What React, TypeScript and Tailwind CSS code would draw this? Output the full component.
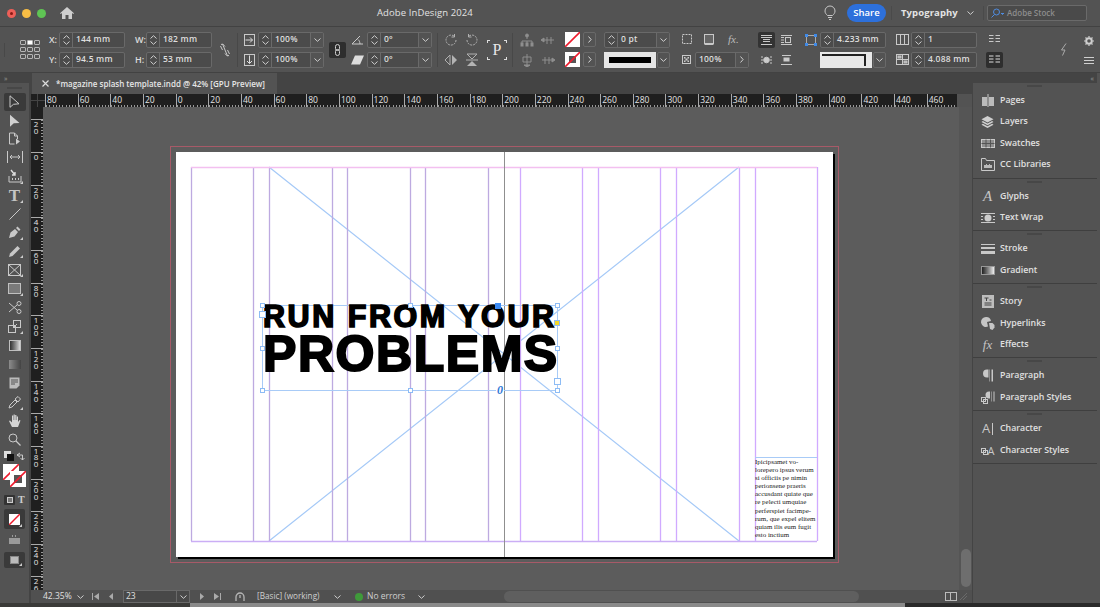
import React from "react";

const S = "#c9c9c9";
const Svg = ({ w = 14, h = 14, children, className = "" }: { w?: number; h?: number; children?: React.ReactNode; className?: string }) => (
  <svg width={w} height={h} viewBox={`0 0 ${w} ${h}`} fill="none" stroke={S} strokeWidth="1" className={`shrink-0 ${className}`}>
    {children}
  </svg>
);

const Chevron = ({ up = false }: { up?: boolean }) => (
  <svg width="7" height="4" viewBox="0 0 7 4" fill="none" stroke="#cfcfcf" strokeWidth="1">
    <path d={up ? "M.5 3.5 3.5.7l3 2.8" : "M.5.5l3 2.8 3-2.8"} />
  </svg>
);

const Stepper = () => (
  <div className="w-[13px] h-full border-r border-[#6a6a6a] flex flex-col items-center justify-center gap-[2px] shrink-0">
    <Chevron up />
    <Chevron />
  </div>
);

const Field = ({ w, value, stepper = true, dd = false, arrow = false }: { w: string; value: string; stepper?: boolean; dd?: boolean; arrow?: boolean }) => (
  <div className={`${w} h-[16px] border border-[#696969] rounded-[2px] bg-[#4b4b4b] flex items-center text-[8.5px] text-[#dedede] font-semibold shrink-0`}>
    {stepper && <Stepper />}
    <span className="flex-1 pl-[3px] tracking-[0.2px] whitespace-nowrap overflow-hidden">{value}</span>
    {dd && (
      <div className="w-[13px] h-full border-l border-[#6a6a6a] bg-[#535353] flex items-center justify-center shrink-0">
        <Chevron />
      </div>
    )}
    {arrow && (
      <div className="w-[13px] h-full border-l border-[#6a6a6a] bg-[#535353] flex items-center justify-center shrink-0">
        <svg width="4" height="7" viewBox="0 0 4 7" fill="none" stroke="#cfcfcf"><path d="M.5.5l2.6 3-2.6 3" /></svg>
      </div>
    )}
  </div>
);

const Cell = ({ a, b, className = "" }: { a: React.ReactNode; b: React.ReactNode; className?: string }) => (
  <div className={`flex flex-col gap-[4px] shrink-0 ${className}`}>
    <div className="h-[16px] flex items-center">{a}</div>
    <div className="h-[16px] flex items-center">{b}</div>
  </div>
);

const Sep = ({ className }: { className: string }) => <div className={`w-px h-[34px] bg-[#484848] shrink-0 ${className}`} />;

const Lbl = ({ t }: { t: string }) => <span className="w-[10px] text-[9px] font-semibold text-[#dcdcdc] shrink-0">{t}</span>;

const NoneSwatch = ({ inner = false }: { inner?: boolean }) => (
  <svg width="15" height="15" viewBox="0 0 15 15" className="shrink-0">
    <rect width="15" height="15" fill="#fff" />
    {inner && <rect x="4" y="4" width="7" height="7" fill="#555" />}
    <path d="M0 15 15 0" stroke="#ee1c2e" strokeWidth="1.6" />
  </svg>
);

const SmallBtn = () => (
  <div className="w-[13px] h-[15px] border border-[#696969] rounded-[2px] flex items-center justify-center">
    <svg width="4" height="7" viewBox="0 0 4 7" fill="none" stroke="#d5d5d5"><path d="M.5.5l2.6 3-2.6 3" /></svg>
  </div>
);

const ControlBar = () => (
  <div className="h-[47px] border-t border-b border-[#424242] flex items-center bg-[#535353] shrink-0">
    <Sep className="ml-[4px] !h-[14px]" />
    <div className="ml-[15px] w-[20px] grid grid-cols-3 gap-[1.5px] shrink-0">
      {[0, 1, 2, 3, 4, 5, 6, 7, 8].map((i) => (
        <div key={i} className={`h-[5.5px] rounded-[1px] border border-[#b5b5b5] ${i === 1 ? "bg-white" : ""}`} />
      ))}
    </div>
    <Cell className="ml-[9px]" a={<><Lbl t="X:" /><Field w="w-[66px]" value="144 mm" /></>} b={<><Lbl t="Y:" /><Field w="w-[66px]" value="94.5 mm" /></>} />
    <Cell className="ml-[10px]" a={<><Lbl t="W:" /><Field w="w-[66px] ml-[1px]" value="182 mm" /></>} b={<><Lbl t="H:" /><Field w="w-[66px] ml-[1px]" value="53 mm" /></>} />
    <Svg w={14} h={14} className="ml-[6px]">
      <path d="M3 1.500c2-1 3 .5 4 2M11 12.500c-2 1-3-.5-4-2M4.500 1l5 12M2.500 3l2 4M11.500 11l-2-4" />
    </Svg>
    <Sep className="ml-[5px]" />
    <Cell
      className="ml-[6px]"
      a={<><Svg w={11} h={12} className="mr-[3px]"><rect x=".5" y=".5" width="10" height="11" /><path d="M1.500 6h7M6 3.500 8.500 6 6 8.500" stroke="#ddd" /></Svg><Field w="w-[66px]" value="100%" dd /></>}
      b={<><Svg w={11} h={12} className="mr-[3px]"><rect x=".5" y=".5" width="10" height="11" /><path d="M5.500 1.500v8M3 7l2.500 2.500L8 7" stroke="#ddd" /></Svg><Field w="w-[66px]" value="100%" dd /></>}
    />
    <div className="ml-[5px] w-[17px] h-[16px] rounded-[2px] bg-[#2e2e2e] flex items-center justify-center shrink-0">
      <svg width="7" height="12" viewBox="0 0 7 12" fill="none" stroke="#d0d0d0"><rect x="1.500" y=".5" width="4" height="6" rx="2" /><rect x="1.500" y="5.500" width="4" height="6" rx="2" /></svg>
    </div>
    <Cell
      className="ml-[5px]"
      a={<><Svg w={13} h={10} className="mr-[3px]"><path d="M1 9h11M1 9l8-8M7 4.500c1.300 1 1.800 2.500 2 4.500" /></Svg><Field w="w-[65px]" value="0°" dd /></>}
      b={<><Svg w={13} h={10} className="mr-[3px]"><path d="M0 9.500 4 .5h9L9 9.500z" fill="#ddd" stroke="none" /></Svg><Field w="w-[65px]" value="0°" dd /></>}
    />
    <Sep className="ml-[5px]" />
    <div className="ml-[6px] w-[34px] grid grid-cols-2 gap-y-[6px] gap-x-[8px] shrink-0 opacity-80">
      <Svg w={14} h={14}><path d="M12 7a5 5 0 1 1-1.500-3.500" strokeDasharray="2 1" /><path d="M10.500 1v3h-3" /></Svg>
      <Svg w={14} h={14}><path d="M2 7a5 5 0 1 0 1.500-3.500" strokeDasharray="2 1" /><path d="M3.500 1v3h3" /></Svg>
      <Svg w={14} h={14}><path d="M6 2v10L1 7z" /><path d="M8 2v10l5-5z" fill="#ccc" stroke="none" /></Svg>
      <Svg w={14} h={14}><path d="M2 1h10L7 6z" /><path d="M2 13h10L7 8z" fill="#ccc" stroke="none" /><path d="M1 7h12" /></Svg>
    </div>
    <div className="ml-[9px] w-[20px] h-[20px] relative flex items-center justify-center shrink-0 font-['Liberation_Serif',serif] text-[16px] text-[#e8e8e8] leading-none">
      P
      <div className="absolute left-0 top-0 w-[3px] h-[3px] border-l border-t border-[#ddd]" />
      <div className="absolute right-0 top-0 w-[3px] h-[3px] border-r border-t border-[#ddd]" />
      <div className="absolute left-0 bottom-0 w-[3px] h-[3px] border-l border-b border-[#ddd]" />
      <div className="absolute right-0 bottom-0 w-[3px] h-[3px] border-r border-b border-[#ddd]" />
    </div>
    <Sep className="ml-[5px]" />
    <div className="ml-[7px] w-[35px] grid grid-cols-2 gap-y-[6px] gap-x-[7px] shrink-0 opacity-50">
      <Svg w={14} h={14}><path d="M7 1v5M2 12V8h10v4M7 8v4" /><circle cx="7" cy="2.500" r="1.500" fill="#ccc" /><rect x="1" y="10" width="2" height="3" fill="#ccc" /><rect x="6" y="10" width="2" height="3" fill="#ccc" /><rect x="11" y="10" width="2" height="3" fill="#ccc" /></Svg>
      <Svg w={14} h={14}><path d="M3 7h10M6 4v7M10 4v7" /><path d="M0 7l3-2v4z" fill="#ccc" /></Svg>
      <Svg w={14} h={14}><path d="M7 1v12M3 4h8v5H3z" /><path d="M4 12h6l-3 2z" fill="#ccc" /></Svg>
      <Svg w={14} h={14}><path d="M1 7h10M4 4v7M8 4v7" /><path d="M14 7l-3-2v4z" fill="#ccc" /></Svg>
    </div>
    <Cell className="ml-[10px]" a={<><NoneSwatch /><div className="ml-[3px]"><SmallBtn /></div></>} b={<><NoneSwatch inner /><div className="ml-[3px]"><SmallBtn /></div></>} />
    <Cell
      className="ml-[8px]"
      a={<Field w="w-[66px]" value="0 pt" dd />}
      b={<><div className="w-[52px] h-[16px] bg-[#e6e6e6] flex items-center justify-center shrink-0"><div className="w-[42px] h-[6px] bg-black" /></div><div className="ml-px w-[13px] h-[16px] border border-[#696969] rounded-[2px] flex items-center justify-center"><Chevron /></div></>}
    />
    <Cell
      className="ml-[12px] w-[67px]"
      a={<div className="flex items-center"><Svg w={11} h={11}><rect x=".5" y=".5" width="9" height="9" strokeDasharray="2 1" /></Svg><Svg w={11} h={11} className="ml-[11px]"><rect x=".5" y=".5" width="9" height="9" fill="#666" /><path d="M.5 10.500h9" strokeWidth="1.500" /></Svg><span className="ml-[13px] font-['Liberation_Serif',serif] italic text-[11px] text-[#bbb] leading-none">fx.</span></div>}
      b={<><Svg w={9} h={9} className="mr-[4px]"><rect x=".5" y=".5" width="8" height="8" /><path d="M2 2h1.500v1.500H2zM5.500 2H7v1.500H5.500zM3.500 3.500H5.500V5.500H3.500zM2 5.500h1.500V7H2zM5.500 5.500H7V7H5.500z" fill="#ccc" stroke="none" /></Svg><Field w="w-[54px]" value="100%" stepper={false} arrow /></>}
    />
    <div className="ml-[9px] w-[36px] grid grid-cols-2 gap-y-[4px] gap-x-[3px] shrink-0">
      <div className="w-[17px] h-[16px] bg-[#333] rounded-[2px] flex items-center justify-center"><Svg w={11} h={10}><path d="M0 .5h11M0 2.500h11M2 4.500h7M2 6.500h7M0 9.500h11" /></Svg></div>
      <div className="w-[17px] h-[16px] flex items-center justify-center"><Svg w={11} h={10}><path d="M0 .5h11M0 9.500h11M0 2.500h3M0 5h3M0 7.500h3" /><rect x="4.500" y="2.500" width="5" height="5" /></Svg></div>
      <div className="w-[17px] h-[16px] flex items-center justify-center"><Svg w={11} h={10}><circle cx="5.500" cy="5" r="2.800" fill="#ccc" /><path d="M0 2h2M9 2h2M0 5h2M9 5h2M0 8h2M9 8h2" /></Svg></div>
      <div className="w-[17px] h-[16px] flex items-center justify-center"><Svg w={11} h={10}><path d="M1 .5h9M0 9.500h11" /><rect x="3" y="3" width="5" height="3" fill="#ccc" /></Svg></div>
    </div>
    <Cell
      className="ml-[11px]"
      a={<><svg width="12" height="12" viewBox="0 0 12 12" className="mr-[3px] shrink-0"><rect x="1.500" y="1.500" width="9" height="9" fill="none" stroke="#aaa" /><path d="M0 0h3v3H0zM9 0h3v3H9zM0 9h3v3H0zM9 9h3v3H9z" fill="#3f8ae8" /></svg><Field w="w-[66px]" value="4.233 mm" /></>}
      b={<><div className="ml-[15px] w-[52px] h-[16px] bg-[#e8e8e8] relative shrink-0"><div className="absolute left-[2px] top-[2px] right-[6px] h-[12px] border-t-2 border-r-2 border-[#222]" /></div><div className="ml-px w-[13px] h-[16px] border border-[#696969] rounded-[2px] flex items-center justify-center"><Chevron /></div></>}
    />
    <Cell
      className="ml-[10px]"
      a={<><Svg w={13} h={11} className="mr-[2px]"><rect x=".5" y=".5" width="12" height="10" /><path d="M4.500 .5v10M8.500 .5v10" /></Svg><Field w="w-[66px]" value="1" /></>}
      b={<><Svg w={13} h={11} className="mr-[2px]"><rect x=".5" y=".5" width="12" height="10" /><path d="M6.500 .5v10M.5 5.500h12" /><rect x="2" y="2" width="3" height="2" fill="#aaa" /><rect x="8" y="7" width="3" height="2" fill="#aaa" /></Svg><Field w="w-[66px]" value="4.088 mm" /></>}
    />
    <div className="ml-[9px] w-[17px] flex flex-col gap-[4px] shrink-0">
      <div className="h-[16px] flex items-center justify-center"><Svg w={11} h={9}><path d="M0 .5h4.500M6.500 .5H11M0 3.500h4.500M6.500 3.500H11M0 6.500h4.500M6.500 6.500H11" /></Svg></div>
      <div className="h-[16px] bg-[#2e2e2e] rounded-[2px] flex items-center justify-center"><Svg w={11} h={9}><path d="M0 1h4.500M6.500 1H11M0 4h4.500M6.500 4H11M0 7h4.500M6.500 7H11" stroke="#ddd" /></Svg></div>
    </div>
    <svg width="8" height="13" viewBox="0 0 8 13" className="ml-[57px] shrink-0" fill="none" stroke="#aaa"><path d="M6 .5 1.500 7H5l-2.500 5.500" /></svg>
    <div className="ml-[16px] flex flex-col gap-[11px] items-center shrink-0">
      <svg width="10" height="10" viewBox="0 0 10 10" fill="none" stroke="#cfcfcf" strokeWidth="2"><circle cx="5" cy="5" r="2.800" /><path d="M5 0v1.500M5 8.500V10M0 5h1.500M8.500 5H10M1.500 1.500l1 1M7.500 7.500l1 1M8.500 1.500l-1 1M2.500 7.500l-1 1" strokeWidth="1.200" /></svg>
      <svg width="10" height="7" viewBox="0 0 10 7" stroke="#cfcfcf"><path d="M0 .5h10M0 3.500h10M0 6.500h10" /></svg>
    </div>
  </div>
);

const TitleBar = () => (
  <div className="h-[26px] flex items-center relative shrink-0 bg-[#535353]">
    <div className="ml-[7px] w-[9px] h-[9px] rounded-full bg-[#ee5f58] flex items-center justify-center"><div className="w-[3px] h-[3px] rounded-full bg-[#8b1a14]" /></div>
    <div className="ml-[6px] w-[9px] h-[9px] rounded-full bg-[#f7bd45]" />
    <div className="ml-[6px] w-[9px] h-[9px] rounded-full bg-[#5fc454]" />
    <svg width="14" height="12" viewBox="0 0 14 12" className="ml-[14px]" fill="#cfcfcf"><path d="M7 0 0 6.300l.8.7L2 6v6h3.500V8h3v4H12V6l1.200 1 .8-.7z" /></svg>
    <span className="ml-[303px] text-[9.500px] text-[#e2e2e2] font-medium tracking-[0.1px] whitespace-nowrap w-[110px]">Adobe InDesign 2024</span>
    <svg width="12" height="16" viewBox="0 0 12 16" fill="none" stroke="#c8c8c8" className="ml-[337px]"><path d="M3.500 10.500C2 9 1 8 1 6a5 5 0 0 1 10 0c0 2-1 3-2.500 4.500z" /><path d="M4 12.500h4M5 14.500h2" /></svg>
    <div className="ml-[11px] w-[39px] h-[18px] rounded-full bg-[#2d70db] flex items-center justify-center text-[9.500px] font-semibold text-white">Share</div>
    <div className="ml-[5px] w-px h-[14px] bg-[#4a4a4a]" />
    <span className="ml-[9px] text-[9.500px] font-bold text-[#e4e4e4] tracking-[0.1px] w-[60px]">Typography</span>
    <div className="ml-[6px]"><Chevron /></div>
    <div className="ml-[9px] w-px h-[14px] bg-[#4a4a4a]" />
    <div className="ml-[3px] w-[100px] h-[16px] border border-[#6a6a6a] rounded-[2px] bg-[#4a4a4a] flex items-center">
      <svg width="13" height="10" viewBox="0 0 13 10" fill="none" stroke="#4f8ce0" className="ml-[3px]"><circle cx="5.500" cy="4" r="3" /><path d="M3.500 6.500.5 9.500" /><path d="M10 5l1.500 1.500L13 5" fill="#4f8ce0" /></svg>
      <span className="ml-[3px] text-[8px] text-[#8d8d8d] font-semibold">Adobe Stock</span>
    </div>
  </div>
);

const Tri = () => <div className="absolute right-[3px] bottom-[2px] w-0 h-0 border-l-[3px] border-l-transparent border-b-[3px] border-b-[#ccc]" />;

const tools: { h: string; tri?: boolean; active?: boolean; icon: React.ReactNode }[] = [
  { h: "h-[18px]", active: true, icon: <Svg w={11} h={14}><path d="M1 .8v11.500l3.500-3 5.500-.5z" /></Svg> },
  { h: "h-[19px]", icon: <svg width="11" height="14" viewBox="0 0 11 14" fill="#d0d0d0"><path d="M1 .8v12l3.800-3.500 5.700-.3z" /></svg> },
  { h: "h-[18px]", icon: <Svg w={13} h={14}><path d="M1.500 1h5l3 3v3M6.500 1v3h3M1.500 1v11h5" /><path d="M8 6.500v6l4-3z" fill="#ccc" stroke="none" /></Svg> },
  { h: "h-[18px]", icon: <Svg w={16} h={12}><path d="M.5 0v12M15.500 0v12M3 6h10M5 4 3 6l2 2M11 4l2 2-2 2" /></Svg> },
  { h: "h-[20px]", tri: true, icon: <Svg w={14} h={14}><path d="M1 7v6h12V7" /><path d="M3 1l4 5M7 3v3H4" stroke="#ddd" strokeWidth="1.400" /><path d="M4 10h1M7 10h1M10 10h1" strokeWidth="2" /></Svg> },
  { h: "h-[19px]", tri: true, icon: <span className="font-['Liberation_Serif',serif] text-[17px] font-bold text-[#c4c4c4] leading-none">T</span> },
  { h: "h-[18px]", icon: <Svg w={12} h={12}><path d="M.5 11.500l11-11" /></Svg> },
  { h: "h-[19px]", tri: true, icon: <svg width="13" height="13" viewBox="0 0 13 13" fill="#c8c8c8"><path d="M1 12 2.500 6.500 7 3l3 3-3.500 4.500zM8 2l1.500-1.500 3 3L11 5z" /></svg> },
  { h: "h-[18px]", tri: true, icon: <svg width="13" height="13" viewBox="0 0 13 13" fill="#c8c8c8"><path d="M1 12l1-3.500L9.500 1 12 3.500 4.500 11z" /></svg> },
  { h: "h-[19px]", tri: true, icon: <Svg w={13} h={12}><rect x=".5" y=".5" width="12" height="11" /><path d="M.5.5l12 11M12.500.5l-12 11" /></Svg> },
  { h: "h-[19px]", tri: true, icon: <div className="w-[13px] h-[11px] border border-[#c0c0c0] bg-[#7a7a7a]" /> },
  { h: "h-[19px]", icon: <Svg w={14} h={13}><circle cx="11" cy="2.500" r="2" /><circle cx="11" cy="10.500" r="2" /><path d="M1 2l8 7M1 11l8-7" /></Svg> },
  { h: "h-[19px]", tri: true, icon: <Svg w={14} h={13}><rect x=".5" y="5.500" width="7" height="7" /><rect x="5.500" y=".5" width="7" height="7" /><path d="M5 8l4-4" /></Svg> },
  { h: "h-[19px]", icon: <div className="w-[12px] h-[11px] border border-[#c0c0c0] bg-gradient-to-r from-[#333] to-[#ddd]" /> },
  { h: "h-[18px]", icon: <div className="w-[12px] h-[9px] bg-gradient-to-r from-[#8c8c8c] to-[#444]" /> },
  { h: "h-[20px]", icon: <Svg w={11} h={12}><path d="M.5.500h10v8l-3 3h-7z" fill="#bbb" stroke="none" /><path d="M2 3h7M2 5h7M2 7h4" stroke="#555" /></Svg> },
  { h: "h-[19px]", tri: true, icon: <Svg w={13} h={13}><path d="M1 12l1-3 5-5 2 2-5 5zM7 3l3-2.500 2.500 2.500L10 6z" /></Svg> },
  { h: "h-[18px]", icon: <svg width="13" height="14" viewBox="0 0 13 14" fill="#d5d5d5"><path d="M4 13 1 7l1-.5 2 2V1.500h1.200V6h.4V.5h1.200V6h.4V1h1.200v5h.4V2.500H10V8l1.500-2 1 .5L10 13z" /></svg> },
  { h: "h-[18px]", icon: <Svg w={13} h={13}><circle cx="5" cy="5" r="4" /><path d="M8 8l4.500 4.500" strokeWidth="1.300" /></Svg> },
];

const Toolbar = () => (
  <div className="w-[29px] shrink-0 bg-[#535353] flex flex-col items-center border-r-2 border-[#444] box-content">
    <div className="h-[10px] w-full bg-[#444] flex items-center pl-[4px] text-[7px] leading-none text-[#9a9a9a]">»</div>
    <div className="h-[10px] flex items-center"><div className="w-[15px] h-[2px] bg-[#474747]" /></div>
    {tools.map((t, i) => (
      <div key={i} className={`${t.h} w-[22px] relative flex items-center justify-center rounded-[2px] ${t.active ? "bg-[#3a3a3a]" : ""}`}>
        {t.icon}
        {t.tri && <Tri />}
      </div>
    ))}
    <div className="h-[16px] w-full flex items-center justify-between px-[4px]">
      <svg width="10" height="10" viewBox="0 0 10 10"><rect x="0" y="0" width="7" height="7" fill="#ddd" /><rect x="3" y="3" width="7" height="7" fill="#111" /></svg>
      <Svg w={9} h={9}><path d="M1 3h5.500v5M4 1 1 3l3 2M4.500 6l2 2 2-2" /></Svg>
    </div>
    <div className="h-[27px] w-full relative">
      <div className="absolute left-[3px] top-0"><svg width="16" height="16" viewBox="0 0 16 16"><rect width="16" height="16" fill="#fff" /><path d="M0 16 16 0" stroke="#ee1c2e" strokeWidth="1.600" /></svg></div>
      <div className="absolute left-[10px] top-[7px]"><svg width="16" height="16" viewBox="0 0 16 16"><rect width="16" height="16" fill="#fff" /><rect x="4" y="4" width="8" height="8" fill="#555" /><path d="M0 16 16 0" stroke="#ee1c2e" strokeWidth="1.600" /></svg></div>
    </div>
    <div className="h-[18px] w-full flex items-center pl-[4px] gap-[3px]">
      <div className="w-[11px] h-[10px] bg-[#333] flex items-center justify-center rounded-[1px]"><div className="w-[6px] h-[6px] border border-[#ccc] bg-[#777]" /></div>
      <span className="font-['Liberation_Serif',serif] font-bold text-[10px] leading-none text-[#ccc]">T</span>
    </div>
    <div className="h-[20px] w-[21px] rounded-[2px] bg-[#3a3a3a] relative flex items-center justify-center">
      <svg width="11" height="11" viewBox="0 0 11 11"><rect width="11" height="11" fill="#fff" /><path d="M0 11 11 0" stroke="#ee1c2e" strokeWidth="1.500" /></svg>
      <Tri />
    </div>
    <div className="h-[21px] flex items-center"><svg width="11" height="9" viewBox="0 0 11 9" fill="#9a9a9a"><path d="M3 0h1v2H3zM6 0h1v2H6zM0 3h11v6H0z" /></svg></div>
    <div className="mt-[2px] h-[16px] w-[21px] rounded-[2px] bg-[#3a3a3a] relative flex items-center justify-center">
      <div className="w-[9px] h-[8px] bg-[#bbb] border border-[#888]" />
      <Tri />
    </div>
  </div>
);

const hLabels = [80, 60, 40, 20, 0, 20, 40, 60, 80, 100, 120, 140, 160, 180, 200, 220, 240, 260, 280, 300, 320, 340, 360, 380, 400, 420, 440, 460];
const vLabels = ["20", "0", "20", "40", "60", "80", "100", "120", "140", "160", "180", "200", "220", "240", "26"];

const HRuler = () => (
  <div className="h-[13px] shrink-0 bg-[#1f1f1f] flex overflow-hidden w-[926px]">
    <div className="w-[14px] h-full shrink-0 bg-[#1f1f1f] relative">
      <div className="absolute left-0 right-0 top-[6px] h-px bg-[#444]" />
      <div className="absolute top-0 bottom-0 left-[6px] w-px bg-[#444]" />
    </div>
    {hLabels.map((n, i) => (
      <div key={i} className="w-[32.67px] shrink-0 h-full border-l border-[#aaa] flex flex-col">
        <span className="flex-1 pl-[1px] text-[8.500px] leading-[11px] text-[#e4e4e4] font-medium">{n}</span>
        <div className="h-[2px] bg-[repeating-linear-gradient(90deg,#999_0,#999_1px,transparent_1px,transparent_3.27px)]" />
      </div>
    ))}
  </div>
);

const VRuler = () => (
  <div className="w-[12px] shrink-0 bg-[#1f1f1f] flex flex-col overflow-hidden">
    <div className="h-[12.300px] shrink-0" />
    {vLabels.map((n, i) => (
      <div key={i} className="h-[32.67px] w-full shrink-0 border-t border-[#aaa] flex">
        <div className="flex-1 flex flex-col items-center pt-[1px]">
          {n.split("").map((c, j) => (
            <span key={j} className="text-[8px] leading-[6.500px] h-[6.500px] text-[#e4e4e4] font-medium">{c}</span>
          ))}
        </div>
        <div className="w-[2px] bg-[repeating-linear-gradient(180deg,#999_0,#999_1px,transparent_1px,transparent_3.27px)]" />
      </div>
    ))}
  </div>
);

const vGuides = [191, 253, 269, 332, 347, 410, 425, 488, 520, 582, 598, 660, 676, 739, 755, 817];
const Handle = ({ className }: { className: string }) => (
  <div className={`absolute w-[5px] h-[5px] bg-white border border-[#8dbcf5] ${className}`} />
);

const bodyLines = ["Ipicipsamet vo-", "lorepero ipsus verum", "si officiis pe nimin", "perionsene praeris", "accusdant quiate que", "re pelecti umquiae", "perferspiet facimpe-", "rum, que expel elitem", "quiam ilis eum fugit", "esto inctium"];

const Canvas = () => (
  <div className="flex-1 relative bg-[#5c5c5c] overflow-hidden">
    <div className="absolute left-[127px] top-[39px] w-[669px] h-[417px] border border-[#a75a68]" />
    <div className="absolute left-[133px] top-[45px] w-[657px] h-[405px] bg-white shadow-[2px_2px_0_#000]">
      <svg width="657" height="405" viewBox="176 152 657 405" className="absolute inset-0" fill="none">
        <path d="M269 167 739 541M739 167 269 541" stroke="#a5c9f7" strokeWidth="1.200" />
        {vGuides.map((x) => (
          <path key={x} d={`M${x + 0.5} 167V541`} stroke={x < 504 ? "#bdaae0" : "#d0aaff"} strokeWidth="1.300" />
        ))}
        <path d="M191 167.500H817" stroke="#f3c0f0" strokeWidth="1.300" />
        <path d="M191 541.500H817" stroke="#cbaef5" strokeWidth="1.300" />
        <path d="M504.500 152V557" stroke="#8f8f8f" />
      </svg>
      <div className="absolute left-[86px] top-[153px] w-[296px] h-[86px] border border-[#a8cbf7]">
        <div className="font-['Liberation_Sans',sans-serif] font-bold text-black -mt-[3px] whitespace-nowrap">
          <div className="text-[30.500px] leading-[27px] h-[27px] tracking-[2.550px] [-webkit-text-stroke:1.600px_black]">RUN FROM YOUR</div>
          <div className="text-[50px] leading-[48px] h-[48px] tracking-[1.550px] [-webkit-text-stroke:2px_black]">PROBLEMS</div>
        </div>
        <Handle className="-left-[3px] -top-[3px]" />
        <Handle className="left-[145px] -top-[3px]" />
        <Handle className="-right-[3px] -top-[3px]" />
        <Handle className="-left-[3px] top-[40px]" />
        <Handle className="-right-[3px] top-[40px]" />
        <Handle className="-left-[3px] -bottom-[3px]" />
        <Handle className="left-[145px] -bottom-[3px]" />
        <Handle className="-right-[3px] -bottom-[3px]" />
        <div className="absolute -left-[4px] top-[5px] w-[7px] h-[7px] bg-white border border-[#8dbcf5]" />
        <div className="absolute -right-[4px] bottom-[5px] w-[7px] h-[7px] bg-white border border-[#8dbcf5]" />
        <div className="absolute left-[232px] -top-[3px] w-[6px] h-[6px] bg-[#3d8bf2]" />
        <div className="absolute -right-[3px] top-[14px] w-[6px] h-[6px] bg-[#f2d82b] border border-[#8dbcf5]" />
        <span className="absolute left-[233px] -bottom-[6px] font-['Liberation_Serif',serif] italic font-bold text-[12px] leading-[12px] text-[#2e78d6] bg-white px-px">0</span>
      </div>
      <div className="absolute left-[579px] top-[305px] w-[62px] h-[84px] border-t border-[#a8cbf7] font-['Liberation_Serif',serif] text-[6.950px] leading-[8.100px] text-[#222] whitespace-nowrap">
        {bodyLines.map((l) => (
          <div key={l}>{l}</div>
        ))}
      </div>
    </div>
  </div>
);

const StatusBar = () => (
  <div className="h-[13px] shrink-0 bg-[#505050] flex items-center text-[8.500px] font-medium text-[#cfcfcf] relative">
    <span className="ml-[12px] w-[30px] text-[#e0e0e0]">42.35%</span>
    <div className="ml-[4px]"><Chevron /></div>
    <svg width="7" height="7" viewBox="0 0 7 7" fill="#aaa" className="ml-[8px]"><path d="M0 0h1v7H0zM7 0v7L2 3.500z" /></svg>
    <svg width="4" height="7" viewBox="0 0 4 7" fill="#aaa" className="ml-[10px]"><path d="M4 0v7L0 3.500z" /></svg>
    <div className="ml-[10px] w-[67px] h-[13px] border border-[#696969] bg-[#484848] flex items-center shrink-0">
      <span className="flex-1 pl-[2px] text-[#e0e0e0]">23</span>
      <div className="w-[13px] h-full border-l border-[#696969] flex items-center justify-center"><Chevron /></div>
    </div>
    <svg width="4" height="7" viewBox="0 0 4 7" fill="#aaa" className="ml-[10px]"><path d="M0 0v7l4-3.500z" /></svg>
    <svg width="7" height="7" viewBox="0 0 7 7" fill="#aaa" className="ml-[10px]"><path d="M6 0h1v7H6zM0 0v7l5-3.500z" /></svg>
    <svg width="12" height="10" viewBox="0 0 12 10" fill="none" stroke="#b5b5b5" strokeWidth="1.300" className="ml-[14px]"><path d="M1 9V5a4 4 0 0 1 8 0v4" /><path d="M5 3v3" /></svg>
    <span className="ml-[10px] w-[74px] text-[8.200px] whitespace-nowrap">[Basic] (working)</span>
    <div className="ml-[3px]"><Chevron /></div>
    <div className="ml-[14px] w-[8px] h-[8px] rounded-full bg-[#3f9a3a]" />
    <span className="ml-[4px] w-[40px] whitespace-nowrap">No errors</span>
    <div className="ml-[11px]"><Chevron /></div>
    <div className="ml-[79px] w-[355px] h-[11px] rounded-full bg-[#5f5f5f] shrink-0" />
    <div className="ml-[86px] w-[12px] h-[9px] border border-[#bbb] flex shrink-0"><div className="w-1/2 h-full border-r border-[#bbb]" /></div>
    <svg width="7" height="7" viewBox="0 0 7 7" stroke="#6a6a6a" className="ml-[3px]"><path d="M0 7l7-7M3 7l4-4" /></svg>
  </div>
);

const panels: { name: string; icon: React.ReactNode }[][] = [
  [
    { name: "Pages", icon: <Svg w={14} h={13}><path d="M1 3h5v9H1zM8 3h5v9H8z" fill="#bbb" stroke="none" /><path d="M7 0v13" /></Svg> },
    { name: "Layers", icon: <svg width="13" height="12" viewBox="0 0 13 13" fill="#cfcfcf"><path d="M6.500 0 13 3.500 6.500 7 0 3.500zM1.500 5.500l5 2.700 5-2.700L13 6.500 6.500 10 0 6.500zM1.500 8.500l5 2.700 5-2.700 1.500 1L6.500 13 0 9.500z" /></svg> },
    { name: "Swatches", icon: <Svg w={14} h={9}><rect x=".5" y=".5" width="13" height="8" fill="#8f8f8f" /><path d="M5 .5v8M9.500 .5v8M.5 4.500h13" stroke="#555" /></Svg> },
    { name: "CC Libraries", icon: <Svg w={14} h={13}><path d="M.5 12.500V.5h4l1 2h8v10z" /><path d="M3 10V7h2V6h1v1h2V6h1v1h2v3z" fill="#bbb" stroke="none" /></Svg> },
  ],
  [
    { name: "Glyphs", icon: <span className="font-['Liberation_Serif',serif] italic text-[15px] leading-none text-[#c5c5c5]">A</span> },
    { name: "Text Wrap", icon: <Svg w={14} h={10}><circle cx="7" cy="5" r="3.500" fill="#ccc" stroke="none" /><path d="M0 .5h14M0 9.500h14M0 3.500h2M12 3.500h2M0 6.500h2M12 6.500h2" /></Svg> },
  ],
  [
    { name: "Stroke", icon: <Svg w={14} h={10}><path d="M0 .5h14" /><path d="M0 4h14" strokeWidth="2" /><path d="M0 8.500h14" strokeWidth="3" /></Svg> },
    { name: "Gradient", icon: <div className="w-[14px] h-[9px] border border-[#999] bg-gradient-to-r from-[#222] to-[#eee]" /> },
  ],
  [
    { name: "Story", icon: <Svg w={12} h={13}><rect width="12" height="13" fill="#bdbdbd" stroke="none" /><path d="M2.500 3h4M4.500 3v3M2.500 8h7M2.500 10h7M7.500 5h2" stroke="#444" /></Svg> },
    { name: "Hyperlinks", icon: <svg width="14" height="13" viewBox="0 0 14 13" fill="#c5c5c5"><path d="M5 0a5 5 0 1 0 2 9.600L6 5l4-1A5 5 0 0 0 5 0z" /><path d="M8 6h3.500l2 2v2.500L11.500 13 9 12z" /></svg> },
    { name: "Effects", icon: <span className="font-['Liberation_Serif',serif] italic text-[13px] leading-none text-[#c5c5c5]">fx</span> },
  ],
  [
    { name: "Paragraph", icon: <svg width="10" height="13" viewBox="0 0 10 13" fill="#c8c8c8"><path d="M4 .5h1.500v8H4A4 4 0 0 1 4 .5zM6.500 .5H7v12h-.5zM8.500 .5H10v12H8.500z" /></svg> },
    { name: "Paragraph Styles", icon: <svg width="14" height="13" viewBox="0 0 14 13" fill="none" stroke="#c8c8c8"><path d="M8 .5h1v7H8a3.500 3.500 0 0 1 0-7zM10.500 .5h.5v10h-.5zM12.500 .5h1v10h-1z" fill="#c8c8c8" stroke="none" /><rect x=".5" y="6.500" width="4" height="4" /><rect x="2.500" y="8.500" width="4" height="4" /></svg> },
  ],
  [
    { name: "Character", icon: <div className="flex items-center gap-[2px]"><span className="text-[13px] leading-none text-[#c8c8c8]">A</span><div className="w-px h-[12px] bg-[#c8c8c8]" /></div> },
    { name: "Character Styles", icon: <div className="flex items-end"><svg width="7" height="7" viewBox="0 0 7 7" fill="none" stroke="#c8c8c8"><rect x=".5" y=".5" width="4" height="4" /><rect x="2.500" y="2.500" width="4" height="4" /></svg><span className="text-[11px] leading-none text-[#c8c8c8] -mb-px">A</span></div> },
  ],
];

const RightPanel = () => (
  <div className="w-[125px] shrink-0 flex flex-col border-l border-[#444] bg-[#535353]">
    <div className="h-[10px] shrink-0 bg-[#444] flex items-center justify-end pr-[3px] text-[7px] leading-none text-[#9a9a9a]">«</div>
    {panels.map((g, i) => (
      <div key={i} className="border-b border-[#3f3f3f] pb-[2px] pt-[7px] relative shrink-0">
        <div className="absolute left-[54px] top-[2px] w-[15px] h-[2px] bg-[#474747]" />
        {g.map((r) => (
          <div key={r.name} className="h-[21.400px] flex items-center">
            <div className="w-[27px] flex items-center justify-center shrink-0 pl-[2px]">{r.icon}</div>
            <span className="text-[8.800px] font-semibold text-[#e0e0e0] whitespace-nowrap">{r.name}</span>
          </div>
        ))}
      </div>
    ))}
  </div>
);

export default function App() {
  return (
    <div className="w-[1100px] h-[607px] overflow-hidden bg-[#535353] flex flex-col font-['Open_Sans',sans-serif]">
      <TitleBar />
      <ControlBar />
      <div className="h-[530px] shrink-0 flex w-[1097px]">
        <Toolbar />
        <div className="flex-1 flex flex-col min-w-0">
          <div className="h-[21px] shrink-0 bg-[#444] flex">
            <div className="ml-px w-[245px] h-full bg-[#535353] flex items-center text-[8px] font-semibold text-[#e6e6e6] whitespace-nowrap">
              <svg width="7" height="7" viewBox="0 0 7 7" stroke="#ddd" strokeWidth="1.200" className="ml-[10px] mr-[7px] shrink-0"><path d="M.5.500l6 6M6.500.500l-6 6" /></svg>
              *magazine splash template.indd @ 42% [GPU Preview]
            </div>
          </div>
          <HRuler />
          <div className="flex-1 flex min-h-0">
            <VRuler />
            <Canvas />
            <div className="w-[13px] shrink-0 bg-[#555] flex flex-col justify-end items-center pb-[3px]">
              <div className="w-[10px] h-[38px] rounded-full bg-[#6e6e6e]" />
            </div>
          </div>
          <StatusBar />
        </div>
        <RightPanel />
      </div>
      <div className="flex-1 flex">
        <div className="w-[190px] h-full bg-[#3a3a38]" />
        <div className="w-[715px] h-full bg-[#8a8a8a]" />
        <div className="flex-1 h-full bg-[#2a2a2a]" />
      </div>
    </div>
  );
}
